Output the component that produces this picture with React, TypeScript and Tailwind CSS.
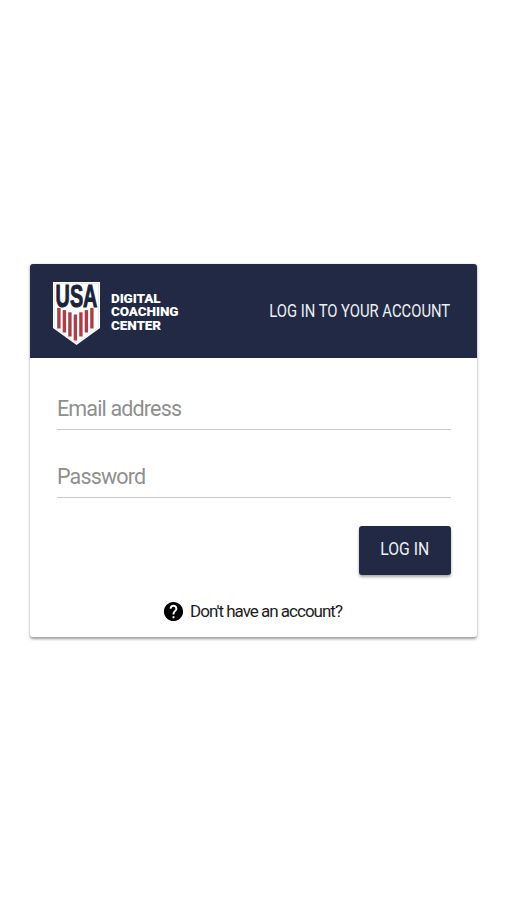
import React from 'react';

const stripes = [0, 1, 2, 3, 4, 5, 6];

function UsaCrest() {
  return (
    <svg width="47" height="63" viewBox="0 0 47 63" className="mt-[6px] shrink-0 overflow-visible">
      <path d="M0 0H47V46L23.5 63L0 46Z" fill="#ffffff" />
      <path d="M1.5 1.5H45.5V45.2L23.5 61L1.5 45.2Z" fill="none" stroke="#d9dbe2" strokeWidth="0.6" />
      <text
        transform="translate(23.5 25) scale(0.64 1)"
        textAnchor="middle"
        fontFamily="'Liberation Sans', sans-serif"
        fontWeight="700"
        fontSize="31"
        fill="#1b2338"
        stroke="#1b2338"
        strokeWidth="1"
      >
        USA
      </text>
      {stripes.map((i) => {
        const x = 4.2 + i * 5.5;
        const off = Math.abs(3 - i);
        const top = 32.5 - off * 2.2;
        const bottom = 58.5 - off * 4;
        return <rect key={i} x={x} y={top} width="3.4" height={bottom - top} fill="#a8404a" />;
      })}
    </svg>
  );
}

function TextInput({ placeholder, type }: { placeholder: string; type: string }) {
  return (
    <input
      type={type}
      placeholder={placeholder}
      className="block h-[42px] w-full border-b border-[#c9c9c9] bg-transparent text-[21.5px] tracking-[-0.85px] text-[#333] outline-none placeholder:text-[#8f8f8f]"
    />
  );
}

export default function App() {
  return (
    <div className="flex min-h-[900px] items-center bg-white px-[30px] font-['Roboto',sans-serif]">
      <div className="h-[373px] w-full overflow-hidden rounded-[3px] bg-white shadow-[0_1.5px_3px_rgba(0,0,0,0.4)]">
        <header className="flex h-[94px] items-center justify-between bg-[#212945] pl-[23px] pr-[27px]">
          <div className="flex items-center gap-[11px]">
            <UsaCrest />
            <div className="mt-[3px] text-[13.5px] leading-[13.5px] font-black tracking-[-0.1px] text-white">
              <div>DIGITAL</div>
              <div>COACHING</div>
              <div>CENTER</div>
            </div>
          </div>
          <h1 className="mt-[2px] origin-right scale-x-[0.8] text-[18.5px] font-normal whitespace-nowrap text-[#eef0f5]">LOG IN TO YOUR ACCOUNT</h1>
        </header>
        <form className="flex flex-col pl-[27px] pr-[26px] pt-[30px]">
          <div className="flex flex-col gap-[26px]">
            <TextInput placeholder="Email address" type="email" />
            <TextInput placeholder="Password" type="password" />
          </div>
          <div className="mt-[28px] flex justify-end">
            <button
              type="button"
              className="h-[49px] w-[92px] rounded-[3px] bg-[#212945] text-[#eef0f5] shadow-[0_2px_3px_rgba(0,0,0,0.35)]"
            >
              <span className="inline-block scale-x-[0.85] text-[18.5px]">LOG IN</span>
            </button>
          </div>
          <div className="mt-[24px] mr-[4px] flex items-center justify-center gap-[6px]">
            <svg width="23" height="23" viewBox="0 0 24 24" fill="#000000" className="-mr-[1px]">
              <path d="M12 2C6.48 2 2 6.48 2 12s4.48 10 10 10 10-4.48 10-10S17.52 2 12 2zm1 17h-2v-2h2v2zm2.07-7.75l-.9.92C13.45 12.9 13 13.5 13 15h-2v-.5c0-1.1.45-2.1 1.17-2.83l1.24-1.26c.37-.36.59-.86.59-1.41 0-1.1-.9-2-2-2s-2 .9-2 2H8c0-2.21 1.79-4 4-4s4 1.79 4 4c0 .88-.36 1.68-.93 2.25z" />
            </svg>
            <span className="text-[17px] tracking-[-1px] text-[#1c1c1c]">Don't have an account?</span>
          </div>
        </form>
      </div>
    </div>
  );
}
